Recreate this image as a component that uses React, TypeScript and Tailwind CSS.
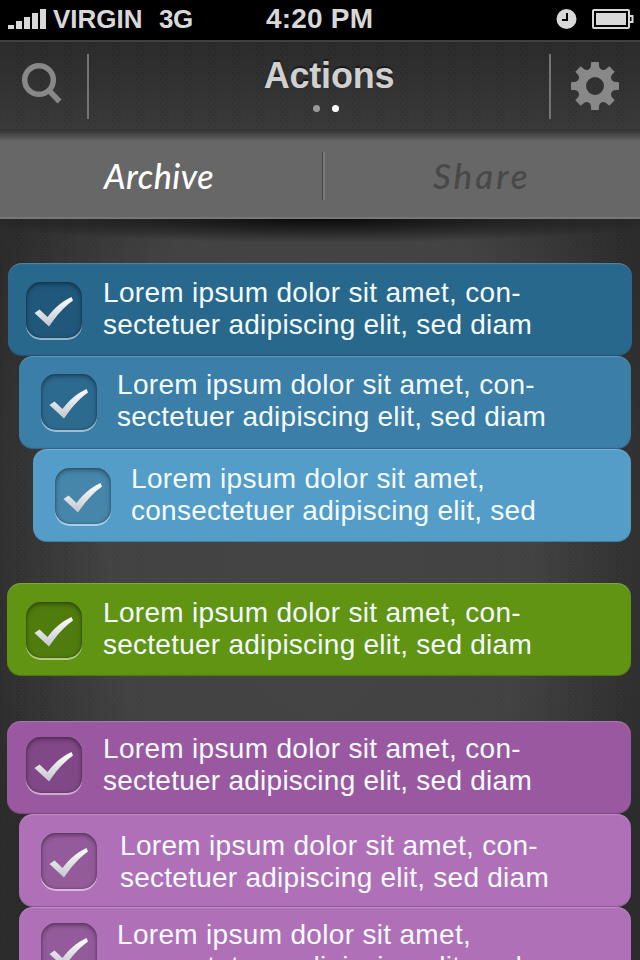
// App.tsx
import React from "react";

type Item = {
  lines: [string, string];
  card: string;
  box: string;
  boxPos: string;
  textPos: string;
};

const LOREM: [string, string] = [
  "Lorem ipsum dolor sit amet, con-",
  "sectetuer adipiscing elit, sed diam",
];

const blue: Item[] = [
  {
    lines: LOREM,
    card: "ml-2 w-[624px] bg-[#28688c]",
    box: "bg-[#1f587b]",
    boxPos: "ml-[18px] mt-[19px]",
    textPos: "ml-[21px] mt-[14px]",
  },
  {
    lines: LOREM,
    card: "ml-[19px] w-[612px] bg-[#3b7ea8]",
    box: "bg-[#2d6a90]",
    boxPos: "ml-[22px] mt-[18px]",
    textPos: "ml-5 mt-[13px]",
  },
  {
    lines: ["Lorem ipsum dolor sit amet,", "consectetuer adipiscing elit, sed"],
    card: "ml-[33px] w-[598px] bg-[#549dc8]",
    box: "bg-[#4686ab]",
    boxPos: "ml-[22px] mt-[19px]",
    textPos: "ml-5 mt-[14px]",
  },
];

const green: Item[] = [
  {
    lines: LOREM,
    card: "ml-[7px] w-[624px] bg-[#609412]",
    box: "bg-[#4f7c0d]",
    boxPos: "ml-[19px] mt-[19px]",
    textPos: "ml-[21px] mt-[14px]",
  },
];

const purple: Item[] = [
  {
    lines: LOREM,
    card: "ml-[7px] w-[624px] bg-[#9a58a1]",
    box: "bg-[#814887]",
    boxPos: "ml-[19px] mt-4",
    textPos: "ml-[21px] mt-3",
  },
  {
    lines: LOREM,
    card: "ml-[19px] w-[612px] bg-[#b070b8]",
    box: "bg-[#945b9b]",
    boxPos: "ml-[22px] mt-[19px]",
    textPos: "ml-[23px] mt-4",
  },
  {
    lines: ["Lorem ipsum dolor sit amet,", "consectetuer adipiscing elit, sed"],
    card: "ml-[19px] w-[612px] bg-[#b070b8]",
    box: "bg-[#945b9b]",
    boxPos: "ml-[22px] mt-4",
    textPos: "ml-5 mt-3",
  },
];

const StatusBar = () => (
  <div className="flex h-10 shrink-0 bg-black text-[26px] leading-[38px] font-bold text-[#d8d8d8]">
    <svg className="ml-2 mt-[9px] shrink-0" width="38" height="20" fill="#d8d8d8">
      <rect x="0" y="16" width="6" height="4" />
      <rect x="8" y="12" width="6" height="8" />
      <rect x="16" y="8" width="6" height="12" />
      <rect x="24" y="4" width="6" height="16" />
      <rect x="32" y="0" width="6" height="20" />
    </svg>
    <span className="ml-[7px] w-[106px] whitespace-nowrap">VIRGIN</span>
    <span className="w-[107px] tracking-[-0.5px]">3G</span>
    <span className="w-[290px] text-[28px] tracking-[0.2px]">4:20 PM</span>
    <svg className="mt-[9px] shrink-0" width="21" height="20">
      <circle cx="10.5" cy="10" r="10" fill="#d8d8d8" />
      <path d="M11 4v7H6" fill="none" stroke="#000" strokeWidth="2" />
    </svg>
    <svg className="ml-[15px] mt-[9px] shrink-0" width="42" height="20">
      <rect x="1" y="1" width="36" height="18" rx="1" fill="none" stroke="#d8d8d8" strokeWidth="2" />
      <rect x="4" y="4" width="30" height="12" fill="#d8d8d8" />
      <path d="M38 7h2.500v6H38" fill="none" stroke="#d8d8d8" strokeWidth="2" />
    </svg>
  </div>
);

const Texture = ({ id }: { id: string }) => (
  <svg className="absolute inset-0 h-full w-full" aria-hidden="true">
    <defs>
      <pattern id={id} x="15" width="24" height="6" patternUnits="userSpaceOnUse">
        <path d="M1 1h2M6 1h2M3 4h2M8 4h2" stroke="#000" strokeWidth="1.500" opacity="0.110" />
      </pattern>
    </defs>
    <rect width="100%" height="100%" fill={`url(#${id})`} />
  </svg>
);

const NavBar = () => (
  <header className="relative h-[89px] shrink-0 border-t-2 border-[#414141] bg-linear-to-b from-[#2b2b2b] to-[#3a3a3a]">
    <Texture id="nav-dots" />
    <div className="relative flex h-full">
      <div className="mt-3 flex h-[65px] w-[89px] border-r-2 border-[#747474]">
        <svg className="ml-[21px] mt-2" width="42" height="44" fill="none" stroke="#888">
          <circle cx="18" cy="18" r="14.300" strokeWidth="5.500" />
          <path d="M27.500 28L38.500 39.500" strokeWidth="5.500" />
        </svg>
      </div>
      <div className="flex flex-1 flex-col items-center">
        <h1 className="mt-[14px] ml-5 text-[36px] leading-10 font-bold tracking-[-0.2px] text-[#d0d0d0] [text-shadow:0_-2px_1px_#1a1a1a]">
          Actions
        </h1>
        <div className="ml-[13px] mt-[9px] flex gap-3">
          <span className="size-[7px] rounded-full bg-[#999]" />
          <span className="size-[7px] rounded-full bg-white" />
        </div>
      </div>
      <div className="mt-3 flex h-[65px] w-[91px] border-l-2 border-[#747474]">
        <Gear />
      </div>
    </div>
  </header>
);

const Gear = () => (
  <svg className="ml-5 mt-2" width="48" height="48" viewBox="-24 -24 48 48">
    <g fill="#888">
      {[0, 45, 90, 135, 180, 225, 270, 315].map((deg) => (
        <path key={deg} d="M-3.800 -24H3.800L4.200 -19Q5 -17 8 -15H-8Q-5 -17 -4.200 -19Z" transform={`rotate(${deg})`} />
      ))}
    </g>
    <circle r="13.300" fill="none" stroke="#888" strokeWidth="8.600" />
  </svg>
);

const Tabs = () => (
  <div className="relative z-10 flex h-[90px] shrink-0 border-b-2 border-[#777] bg-linear-to-b from-[#303030] via-[#676767] via-14% to-[#676767] font-['Segoe_Print','Bradley_Hand','Lato',sans-serif] text-[34px] leading-[93px] font-medium italic">
    <div className="w-[322px] pl-[104px] tracking-[0.5px] text-white">Archive</div>
    <div className="mt-[23px] h-12 w-[3px] border-r-2 border-l border-l-[#464646] border-r-[#7c7c7c]" />
    <div className="pl-[108px] text-[35px] tracking-[3px] text-[#484848]">Share</div>
  </div>
);

const Check = () => (
  <svg className="ml-2 mt-[14px]" width="40" height="32" viewBox="0 0 40 32">
    <defs>
      <linearGradient id="check" x1="0" y1="0" x2="0" y2="1">
        <stop offset="0" stopColor="#fff" />
        <stop offset="1" stopColor="#c3c7ce" />
      </linearGradient>
    </defs>
    <path
      d="M0.500 17L5.500 13.500L13.500 21C20 12.500 27 6 37.500 1L39 4.500C30 11 22 20 15 30.500Z"
      fill="url(#check)"
    />
  </svg>
);

const Card = ({ item }: { item: Item }) => (
  <div
    className={`flex h-[93px] shrink-0 rounded-[14px] shadow-[inset_0_1px_1px_rgba(255,255,255,0.2),inset_0_-1px_1px_rgba(0,0,0,0.2)] ${item.card}`}
  >
    <div
      className={`h-14 w-14 shrink-0 rounded-[15px] shadow-[inset_0_2px_5px_rgba(0,0,0,0.4),inset_0_0_2px_rgba(0,0,0,0.3),0_2px_0_rgba(255,255,255,0.5)] ${item.box} ${item.boxPos}`}
    >
      <Check />
    </div>
    <p className={`text-[28px] leading-8 whitespace-nowrap text-[#f3fbff] ${item.textPos}`}>
      <span className="tracking-[0.320px]">{item.lines[0]}</span>
      <br />
      <span className="tracking-[0.250px]">{item.lines[1]}</span>
    </p>
  </div>
);

const Group = ({ items }: { items: Item[] }) => (
  <section className="relative flex flex-col">
    {items.map((item, i) => (
      <Card key={i} item={item} />
    ))}
  </section>
);

const App = () => {
  return (
    <div className="flex h-[960px] w-[640px] flex-col overflow-hidden bg-[#333] font-['Liberation_Sans',Arial,sans-serif]">
      <StatusBar />
      <NavBar />
      <Tabs />
      <main className="relative flex min-h-0 flex-1 flex-col bg-[radial-gradient(ellipse_350px_640px_at_50%_42%,#444_0%,#434343_60%,#2c2c2c_100%)] pt-11">
        <div className="absolute inset-0 [mask-image:linear-gradient(to_right,black,transparent_35%,transparent_65%,black)]">
          <Texture id="list-dots" />
        </div>
        <div className="absolute inset-x-0 top-0 h-6 bg-[radial-gradient(ellipse_55%_100%_at_50%_0%,rgba(0,0,0,0.85),rgba(0,0,0,0.5)_45%,transparent)]" />
        <Group items={blue} />
        <div className="h-[41px] shrink-0" />
        <Group items={green} />
        <div className="h-[45px] shrink-0" />
        <Group items={purple} />
      </main>
    </div>
  );
};

export default App;
